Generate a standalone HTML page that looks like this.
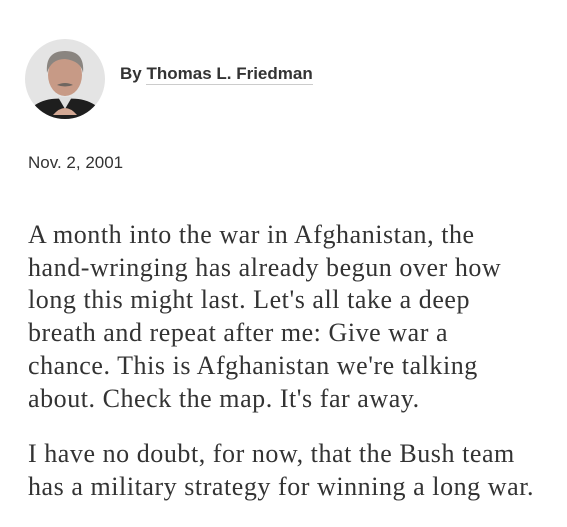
<!DOCTYPE html>
<html><head><meta charset="utf-8"><style>
body{margin:0;width:567px;height:509px;background:#fff;overflow:hidden;position:relative;font-family:"Liberation Sans",sans-serif;}
.av{position:absolute;left:25px;top:39px;width:80px;height:80px;border-radius:50%;background:#e4e4e4;overflow:hidden}
.by{position:absolute;left:120px;top:64px;font-size:17px;font-weight:bold;color:#333}
.by span{border-bottom:1px solid #ccc;padding-bottom:1px}
.date{position:absolute;left:28px;top:153px;font-size:17px;color:#333}
.body{position:absolute;left:28px;top:219px;width:535px;font-family:"Liberation Serif",serif;font-size:26px;letter-spacing:0.55px;line-height:32.7px;color:#333;white-space:nowrap}
p{margin:0 0 23px 0}
</style></head><body>
<div class="av"><svg width="80" height="80" viewBox="0 0 80 80">
<path d="M6 80 L10 66 Q22 58 40 60 Q58 58 70 66 L74 80 Z" fill="#1e1e1e"/>
<path d="M33 58 L40 70 L47 58 Z" fill="#ddd"/>
<ellipse cx="40" cy="36" rx="17" ry="21" fill="#c79a86"/>
<path d="M22 34 Q20 12 40 12 Q60 12 58 34 Q56 22 40 20 Q26 20 22 34Z" fill="#8a8580"/>
<path d="M32 46 Q40 42 48 46 Q40 49 32 46Z" fill="#6f6660"/>
<path d="M28 76 Q40 62 52 76 Z" fill="#d3a894"/>
</svg></div>
<div class="by">By <span>Thomas L. Friedman</span></div>
<div class="date">Nov. 2, 2001</div>
<div class="body">
<p>A month into the war in Afghanistan, the<br>hand-wringing has already begun over how<br>long this might last. Let's all take a deep<br>breath and repeat after me: Give war a<br>chance. This is Afghanistan we're talking<br>about. Check the map. It's far away.</p>
<p>I have no doubt, for now, that the Bush team<br>has a military strategy for winning a long war.</p>
</div>
</body></html>
